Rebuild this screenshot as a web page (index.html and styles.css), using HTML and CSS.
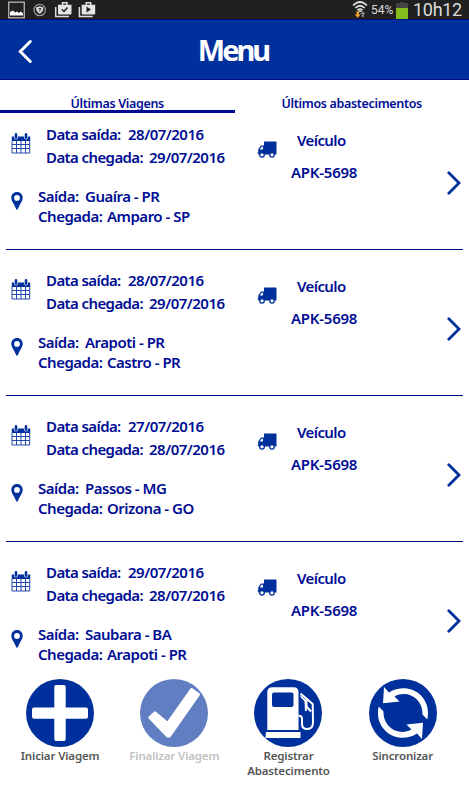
FILE: index.html
```
<!DOCTYPE html>
<html lang="pt-BR">
<head>
<meta charset="utf-8">
<title>Menu</title>
<link rel="stylesheet" href="styles.css">
</head>
<body>
<svg class="defs" width="0" height="0" aria-hidden="true">
  <symbol id="calendar" viewBox="0 0 20 21">
    <path d="M.8 3.5H19.2V8H.8Z" fill="#00309c"/>
    <path d="M1 8V20H18.700V8M1 11.500H19M1 15.500H19M5.500 8V20M10 8V20M14.500 8V20" fill="none" stroke="#2449ad" stroke-width="1"/>
    <path d="M5 1V4.500M15 1V4.500" stroke="#fff" stroke-width="3.800" stroke-linecap="round"/>
    <path d="M5 1.400V4.600M15 1.400V4.600" stroke="#00309c" stroke-width="2.600" stroke-linecap="round"/>
  </symbol>
  <symbol id="pin" viewBox="0 0 12 18">
    <path d="M6 0C2.600 0 .3 2.500.3 5.700.3 8 1.500 10 3 12.500L5.300 17.300Q6 18.300 6.700 17.300L9 12.500C10.500 10 11.700 8 11.700 5.700 11.700 2.500 9.400 0 6 0ZM6 3A2.900 2.900 0 1 1 6 8.800 2.900 2.900 0 0 1 6 3Z" fill="#00309c" fill-rule="evenodd"/>
  </symbol>
  <symbol id="truck" viewBox="0 0 20 17">
    <path d="M7 .5H19Q19.500.5 19.500 1V13.500H1.200V12.500L.5 12.300V11.500H1.200V8.500L4 4.500H7ZM2.800 8.500H6V5.800H4.600Z" fill="#00309c" fill-rule="evenodd"/>
    <circle cx="5" cy="13.800" r="2.300" fill="#fff" stroke="#00309c" stroke-width="1.300"/>
    <circle cx="15" cy="13.800" r="2.300" fill="#fff" stroke="#00309c" stroke-width="1.300"/>
  </symbol>
  <symbol id="next" viewBox="0 0 14 24">
    <path d="M1.800 1.800 12 12 1.800 22.200" fill="none" stroke="#00309c" stroke-width="2.800" stroke-linecap="round"/>
  </symbol>
</svg>
<div class="status">
  <svg width="100" height="19" viewBox="0 0 100 19">
    <rect x="8.700" y="2.200" width="15.600" height="15.600" fill="#222" stroke="#aaa" stroke-width="1.400"/>
    <path d="M10 15.500V12L13 10.500 15 12.500 17 11.500 19 13 21 11.500 23 13.500V15.500Z" fill="#fff"/>
    <circle cx="39.700" cy="10" r="5.700" fill="#222" stroke="#999" stroke-width="1.200"/>
    <path d="M36 7.500 39.700 6.300 43.400 7.500Q43.300 12 39.700 13.800 36.100 12 36 7.500Z" fill="#ddd"/>
    <path d="M38.500 8.600H41L39.800 10V11.500" fill="none" stroke="#333"/>
    <g id="bag">
      <path d="M55.700 7V16.500H69" fill="none" stroke="#ddd" stroke-width="1.500"/>
      <path d="M58 4.700H71.500V13.500Q71.500 14.500 70.500 14.500H59Q58 14.500 58 13.500Z" fill="#e5e5e5"/>
      <path d="M62.500 5V2.800H67V5" fill="none" stroke="#e5e5e5" stroke-width="1.400"/>
    </g>
    <path d="M61.700 9.300 64 11.500 67.500 7.500" fill="none" stroke="#222" stroke-width="1.500"/>
    <use href="#bag" x="23.700"/>
    <path d="M86.500 6.500V12.500L91 9.500Z" fill="#222"/>
  </svg>
  <svg class="wifi" width="16" height="19" viewBox="0 0 16 19">
    <path d="M1 5.500Q8 -1.500 15 5.500M3.300 8Q8 3.500 12.700 8M5.500 10.300Q8 8 10.500 10.300" fill="none" stroke="#ddd" stroke-width="1.700"/>
    <path d="M8 10 10 12H6Z" fill="#eee"/>
    <path d="M4.500 11.500H7V14.500H8.700L5.700 17.800 2.700 14.500H4.500Z" fill="#f5a32c"/>
    <path d="M9.800 17V14H8.200L10.800 11.200 13.400 14H11.800V17Z" fill="#888"/>
  </svg>
  <span class="percent">54%</span>
  <svg class="battery" width="12" height="18" viewBox="0 0 12 18"><path d="M4 1H8V2H12V8H0V2H4Z" fill="#444"/><path d="M0 7H12V18H0Z" fill="#84bd1b"/></svg>
  <span class="clock">10h12</span>
</div>
<header>
  <svg class="back" width="16" height="25" viewBox="0 0 16 25"><path d="M13.300 2.500 3.300 12.500 13.300 22.500" fill="none" stroke="#fff" stroke-width="3" stroke-linecap="round"/></svg>
  <h1>Menu</h1>
</header>
<nav><div class="tab active"><span>Últimas Viagens</span></div><div class="tab"><span class="fuel">Últimos abastecimentos</span></div></nav>
<main>
  <article>
    <div class="trip">
      <div class="dates"><svg class="cal"><use href="#calendar"/></svg><div><p><span class="l1">Data saída:</span><span class="date">28/07/2016</span></p><p><span class="l2">Data chegada:</span><span class="date">29/07/2016</span></p></div></div>
      <div class="places"><svg class="pin"><use href="#pin"/></svg><div><p><span class="l3">Saída:</span><span>Guaíra - PR</span></p><p><span class="l4">Chegada:</span><span>Amparo - SP</span></p></div></div>
    </div>
    <div class="vehicle"><svg class="truck"><use href="#truck"/></svg><div><p>Veículo</p><p class="plate">APK-5698</p></div></div>
    <svg class="next"><use href="#next"/></svg>
  </article>
  <article>
    <div class="trip">
      <div class="dates"><svg class="cal"><use href="#calendar"/></svg><div><p><span class="l1">Data saída:</span><span class="date">28/07/2016</span></p><p><span class="l2">Data chegada:</span><span class="date">29/07/2016</span></p></div></div>
      <div class="places"><svg class="pin"><use href="#pin"/></svg><div><p><span class="l3">Saída:</span><span>Arapoti - PR</span></p><p><span class="l4">Chegada:</span><span>Castro - PR</span></p></div></div>
    </div>
    <div class="vehicle"><svg class="truck"><use href="#truck"/></svg><div><p>Veículo</p><p class="plate">APK-5698</p></div></div>
    <svg class="next"><use href="#next"/></svg>
  </article>
  <article>
    <div class="trip">
      <div class="dates"><svg class="cal"><use href="#calendar"/></svg><div><p><span class="l1">Data saída:</span><span class="date">27/07/2016</span></p><p><span class="l2">Data chegada:</span><span class="date">28/07/2016</span></p></div></div>
      <div class="places"><svg class="pin"><use href="#pin"/></svg><div><p><span class="l3">Saída:</span><span>Passos - MG</span></p><p><span class="l4">Chegada:</span><span>Orizona - GO</span></p></div></div>
    </div>
    <div class="vehicle"><svg class="truck"><use href="#truck"/></svg><div><p>Veículo</p><p class="plate">APK-5698</p></div></div>
    <svg class="next"><use href="#next"/></svg>
  </article>
  <article>
    <div class="trip">
      <div class="dates"><svg class="cal"><use href="#calendar"/></svg><div><p><span class="l1">Data saída:</span><span class="date">29/07/2016</span></p><p><span class="l2">Data chegada:</span><span class="date">28/07/2016</span></p></div></div>
      <div class="places"><svg class="pin"><use href="#pin"/></svg><div><p><span class="l3">Saída:</span><span>Saubara - BA</span></p><p><span class="l4">Chegada:</span><span>Arapoti - PR</span></p></div></div>
    </div>
    <div class="vehicle"><svg class="truck"><use href="#truck"/></svg><div><p>Veículo</p><p class="plate">APK-5698</p></div></div>
    <svg class="next"><use href="#next"/></svg>
  </article>
</main>
<footer>
  <div class="action"><svg viewBox="0 0 68 68"><circle cx="34" cy="34" r="34" fill="#00309c"/><path d="M30 6H38Q39.700 6 39.700 8V28.500H60Q62 28.500 62 30.500V37.700Q62 39.700 60 39.700H39.700V60Q39.700 62 38 62H30Q28.300 62 28.300 60V39.700H8Q6 39.700 6 37.700V30.500Q6 28.500 8 28.500H28.300V8Q28.300 6 30 6Z" fill="#fff"/></svg><span>Iniciar Viagem</span></div>
  <div class="action disabled"><svg viewBox="0 0 68 68"><circle cx="34" cy="34" r="34" fill="#617ec2"/><path d="M9.800 38.500 15 33.800 27.500 44.500 51.500 10.500 58.500 15.500 29.500 57 27.500 57Z" fill="#fff" stroke="#fff" stroke-width="3" stroke-linejoin="round"/></svg><span>Finalizar Viagem</span></div>
  <div class="action"><svg viewBox="0 0 68 68"><circle cx="34" cy="34" r="34" fill="#00309c"/><path d="M13.300 51V13Q13.300 8.300 18.300 8.300H39.500Q44.500 8.300 44.500 13V51Z" fill="#fff"/><rect x="18" y="13.500" width="21.500" height="14.500" rx="2" fill="#00309c"/><path d="M12 53H46.500V59H11.300Z" fill="#fff"/><path d="M46.500 14.500 58.700 25 59 43Q59 50 53.300 50 48 50 48 45V39.500Q48 37 44.500 36.500M52.500 20V27.500L57 32.500" fill="none" stroke="#fff" stroke-width="2" stroke-linejoin="round"/><path d="M46.500 16 52.800 22V32H51L50.500 22.500 46.500 18Z" fill="#fff"/></svg><span>Registrar<br>Abastecimento</span></div>
  <div class="action"><svg viewBox="0 0 68 68"><circle cx="34" cy="34" r="34" fill="#00309c"/><path id="arc" d="M15 8 14 24.200 30.500 22.500 25.500 17.500C38 10.500 54 19.500 53.500 35.500L58.300 40.500C62.500 23 49 9 35 9.300 29.500 9.300 24.500 10.500 20 13.500Z" fill="#fff"/><use href="#arc" transform="rotate(180 34 34)"/></svg><span>Sincronizar</span></div>
</footer>
</body>
</html>
```
FILE: styles.css
```
* { box-sizing: border-box; }
body { margin: 0; width: 469px; height: 800px; overflow: hidden; background: #fff; color: #000d94; font-family: "Noto Sans", "DejaVu Sans", sans-serif; display: flex; flex-direction: column; }
p, h1 { margin: 0; }
svg { display: block; flex: none; }
.defs { position: absolute; }
.status { height: 19px; flex: none; background: #202020; color: #ddd; font-family: Roboto, sans-serif; display: flex; align-items: center; }
.wifi { margin-left: 252px; }
.percent { font-size: 12px; margin-left: 3px; width: 25px; letter-spacing: 0; }
.battery { margin-top: 1px; }
.clock { font-size: 18px; line-height: 19px; margin-left: 5px; letter-spacing: -.3px; }
header { height: 61px; flex: none; background: #00309c; border-bottom: 1px solid #000b80; border-top: 1px solid #000b80; display: grid; grid-template-columns: 18px 1fr 18px; align-items: center; }
.back { margin-left: 17px; margin-top: 4px; }
h1 { color: #fff; text-align: center; font-size: 29px; line-height: 40px; letter-spacing: -3px; font-weight: 700; text-indent: -3px; }
nav { height: 33px; flex: none; display: flex; }
.tab { width: 234.500px; padding-top: 14px; text-align: center; font-size: 12.500px; line-height: 20px; font-weight: 600; letter-spacing: -.33px; }
.active { border-bottom: 3px solid #000b94; }
main { margin-top: -9px; height: 570px; flex: none; overflow: hidden; }
article { height: 146px; margin: 0 6px; border-bottom: 1.500px solid #000a7c; display: grid; grid-template-columns: 251px 190px 14px; font-size: 15px; font-weight: 600; letter-spacing: -.6px; white-space: nowrap; }
article:last-child { border: 0; }
p { display: flex; }
.dates { display: flex; padding: 18.500px 0 0 5px; line-height: 23.500px; }
.cal { width: 20px; height: 21px; margin: 10.500px 15px 0 0; }
.places { display: flex; padding: 16px 0 0 5px; line-height: 20.500px; letter-spacing: -.5px; }
.pin { width: 12px; height: 18px; margin: 6px 15px 0 0; }
.l1 { width: 82px; }
.l2 { width: 103px; }
.l3 { width: 47px; }
.l4 { width: 69px; }
.date { letter-spacing: -.5px; }
.vehicle { display: flex; padding: 20px 0 0; line-height: 32px; }
.plate { letter-spacing: -.25px; }
.truck { width: 20px; height: 17px; margin: 17px 14px 0 0; }
.vehicle p:first-child { padding-left: 6px; }
.next { width: 14px; height: 24px; margin-top: 67px; }
footer { display: flex; padding-top: 5px; margin-left: 16px; color: #555; font-size: 11.500px; line-height: 15px; font-weight: 600; letter-spacing: -.15px; text-align: center; }
.action { width: 114.200px; flex: none; display: flex; flex-direction: column; align-items: center; }
.action:first-child { margin-left: -13px; }
.action svg { width: 68px; height: 68px; margin-bottom: 1px; }
.disabled { color: #c1c1c1; }
```
